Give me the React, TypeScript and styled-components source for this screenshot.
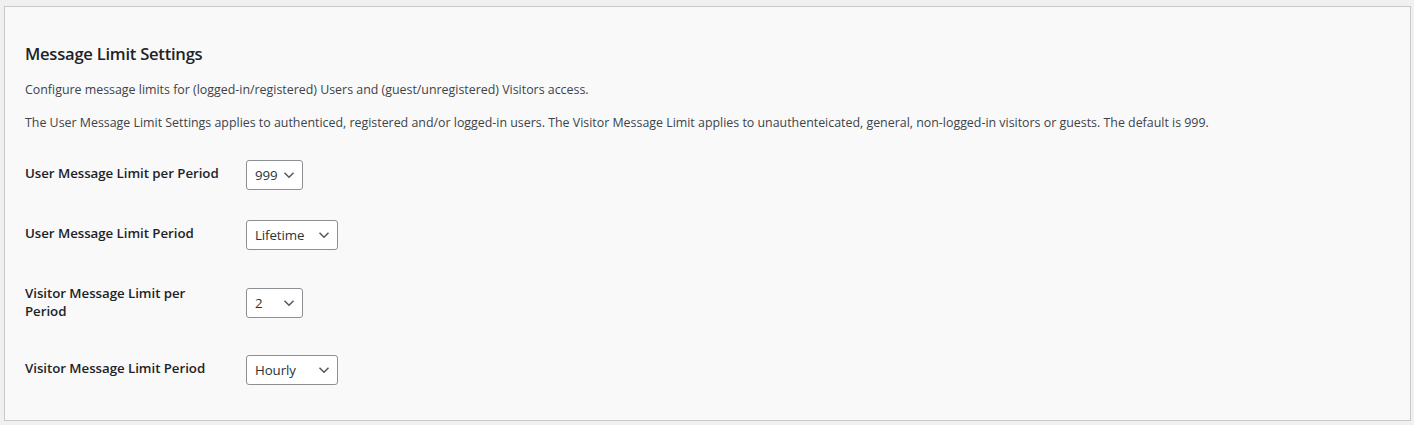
import React from "react";
import styled, { createGlobalStyle } from "styled-components";

const Global = createGlobalStyle`
  html, body { margin: 0; padding: 0; background: #f0f0f1; }
  body { font-family: "Open Sans", "Noto Sans", sans-serif; color: #3c434a; font-size: 13px; }
`;

const Page = styled.div`
  padding: 6px 3px 4px 4px;
`;

const Card = styled.section`
  background: #f9f9f9;
  border: 1px solid #c8c8c8;
  padding: 35px 20px 20px 20px;
`;

const Title = styled.h2`
  margin: 0;
  font-size: 16.6px;
  font-weight: 600;
  line-height: 24px;
  color: #1d2327;
  letter-spacing: -0.25px;
`;

const Para = styled.p`
  margin: 14px 0 0;
  font-size: 12.4px;
  line-height: 19.5px;
  color: #3c434a;
  &:last-of-type {
    margin-top: 13px;
  }
`;

const Form = styled.div`
  margin-top: 13px;
  display: flex;
  flex-direction: column;
`;

const Row = styled.div`
  display: grid;
  grid-template-columns: 221px auto;
  align-items: center;
  justify-content: start;
`;

const Label = styled.div`
  align-self: start;
  width: 198px;
  padding: 19px 0 20px;
  font-size: 13.3px;
  font-weight: 600;
  line-height: 18.2px;
  color: #1d2327;
  letter-spacing: -0.05px;
`;

const Field = styled.div`
  padding: 15px 0;
`;

const SelectWrap = styled.span<{ $w: number }>`
  position: relative;
  display: inline-block;
  width: ${(p) => p.$w}px;
  vertical-align: middle;
`;

const Select = styled.select`
  appearance: none;
  -webkit-appearance: none;
  box-sizing: border-box;
  width: 100%;
  height: 30px;
  margin: 0;
  padding: 0 24px 0 8px;
  border: 1px solid #8c8f94;
  border-radius: 3px;
  background: #fff;
  color: #2c3338;
  font-family: "Open Sans", "Noto Sans", sans-serif;
  font-size: 13.3px;
  letter-spacing: -0.1px;
  line-height: 28px;
  outline: none;
`;

const Chevron = styled.svg`
  position: absolute;
  right: 8px;
  top: 9px;
  width: 12px;
  height: 12px;
  pointer-events: none;
`;

type Opt = { label: string; value: string; options: string[]; width: number };

const rows: Opt[] = [
  { label: "User Message Limit per Period", value: "999", options: ["999", "500", "100", "50", "10", "5", "2", "1"], width: 57 },
  { label: "User Message Limit Period", value: "Lifetime", options: ["Hourly", "Daily", "Weekly", "Monthly", "Lifetime"], width: 92 },
  { label: "Visitor Message Limit per Period", value: "2", options: ["999", "500", "100", "50", "10", "5", "2", "1"], width: 57 },
  { label: "Visitor Message Limit Period", value: "Hourly", options: ["Hourly", "Daily", "Weekly", "Monthly", "Lifetime"], width: 92 },
];

function Dropdown({ value, options, width }: { value: string; options: string[]; width: number }) {
  return (
    <SelectWrap $w={width}>
      <Select defaultValue={value}>
        {options.map((o) => (
          <option key={o} value={o}>
            {o}
          </option>
        ))}
      </Select>
      <Chevron viewBox="0 0 12 12" aria-hidden="true">
        <path d="M1.5 3.8 L6 8.2 L10.5 3.8" fill="none" stroke="#50575e" strokeWidth="1.5" />
      </Chevron>
    </SelectWrap>
  );
}

export default function App() {
  return (
    <Page>
      <Global />
      <Card>
        <Title>Message Limit Settings</Title>
        <Para>Configure message limits for (logged-in/registered) Users and (guest/unregistered) Visitors access.</Para>
        <Para>
          The User Message Limit Settings applies to authenticed, registered and/or logged-in users. The Visitor Message
          Limit applies to unauthenteicated, general, non-logged-in visitors or guests. The default is 999.
        </Para>
        <Form>
          {rows.map((r) => (
            <Row key={r.label}>
              <Label>{r.label}</Label>
              <Field>
                <Dropdown value={r.value} options={r.options} width={r.width} />
              </Field>
            </Row>
          ))}
        </Form>
      </Card>
    </Page>
  );
}
